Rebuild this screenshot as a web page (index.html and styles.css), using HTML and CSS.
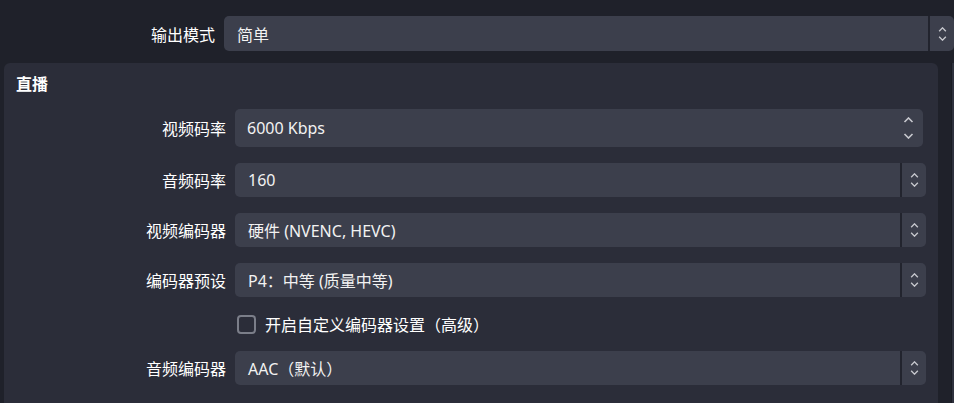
FILE: index.html
```html
<!DOCTYPE html>
<html lang="zh-CN">
<head>
  <meta charset="UTF-8">
  <meta name="viewport" content="width=device-width, initial-scale=1.0">
  <title>输出设置</title>
  <link rel="stylesheet" href="styles.css">
</head>
<body>
  <div class="top-row">
    <label class="top-label">输出模式</label>
    <div class="combo combo-top">
      <span class="combo-text">简单</span>
      <span class="combo-arrows">
        <svg class="chev" viewBox="0 0 10 6"><polyline points="1,5 5,1 9,5"/></svg>
        <svg class="chev" viewBox="0 0 10 6"><polyline points="1,1 5,5 9,1"/></svg>
      </span>
    </div>
  </div>

  <div class="content">
    <section class="group">
      <h2 class="group-title">直播</h2>
      <div class="form">
        <label class="form-label">视频码率</label>
        <div class="spinbox">
          <span class="combo-text">6000 Kbps</span>
          <span class="spin-arrows">
            <svg class="chev chev-big" viewBox="0 0 10 6"><polyline points="1,5 5,1 9,5"/></svg>
            <svg class="chev chev-big" viewBox="0 0 10 6"><polyline points="1,1 5,5 9,1"/></svg>
          </span>
        </div>

        <label class="form-label">音频码率</label>
        <div class="combo">
          <span class="combo-text">160</span>
          <span class="combo-arrows">
            <svg class="chev" viewBox="0 0 10 6"><polyline points="1,5 5,1 9,5"/></svg>
            <svg class="chev" viewBox="0 0 10 6"><polyline points="1,1 5,5 9,1"/></svg>
          </span>
        </div>

        <label class="form-label">视频编码器</label>
        <div class="combo">
          <span class="combo-text">硬件 (NVENC, HEVC)</span>
          <span class="combo-arrows">
            <svg class="chev" viewBox="0 0 10 6"><polyline points="1,5 5,1 9,5"/></svg>
            <svg class="chev" viewBox="0 0 10 6"><polyline points="1,1 5,5 9,1"/></svg>
          </span>
        </div>

        <label class="form-label">编码器预设</label>
        <div class="combo">
          <span class="combo-text">P4：中等 (质量中等)</span>
          <span class="combo-arrows">
            <svg class="chev" viewBox="0 0 10 6"><polyline points="1,5 5,1 9,5"/></svg>
            <svg class="chev" viewBox="0 0 10 6"><polyline points="1,1 5,5 9,1"/></svg>
          </span>
        </div>

        <span></span>
        <label class="check-row">
          <span class="checkbox"></span>
          <span>开启自定义编码器设置（高级）</span>
        </label>

        <label class="form-label">音频编码器</label>
        <div class="combo">
          <span class="combo-text">AAC（默认）</span>
          <span class="combo-arrows">
            <svg class="chev" viewBox="0 0 10 6"><polyline points="1,5 5,1 9,5"/></svg>
            <svg class="chev" viewBox="0 0 10 6"><polyline points="1,1 5,5 9,1"/></svg>
          </span>
        </div>
      </div>
    </section>
    <div class="scrollbar">
      <div class="scroll-handle"></div>
    </div>
  </div>
</body>
</html>
```

FILE: styles.css
```css
html, body {
  margin: 0;
  height: 100%;
  overflow: hidden;
}
body {
  background-color: #1f212a;
  color: #ffffff;
  font-family: "Noto Sans", "Noto Sans CJK SC", sans-serif;
  font-size: 16px;
}
.top-row {
  display: flex;
  align-items: center;
  padding-top: 16px;
  height: 35px;
}
.top-label {
  width: 224px;
  padding-right: 9px;
  box-sizing: border-box;
  text-align: right;
  flex: none;
}
.combo, .spinbox {
  display: flex;
  align-items: center;
  background-color: #3c3f4c;
  border-radius: 5px;
  height: 34px;
  font-size: 16px;
  color: #f2f2f2;
  overflow: hidden;
}
.combo-top {
  flex: 1;
  height: 35px;
}
.combo-text {
  flex: 1;
  padding-left: 13px;
  white-space: nowrap;
}
.combo-arrows {
  width: 24px;
  height: 100%;
  border-left: 2px solid #22242e;
  display: flex;
  flex-direction: column;
  align-items: center;
  justify-content: center;
  gap: 4px;
}
.chev {
  width: 9px;
  height: 5px;
  fill: none;
  stroke: #c8c9cf;
  stroke-width: 1.6;
  display: block;
}
.content {
  display: flex;
  margin-top: 12px;
  height: 340px;
}
.group {
  margin-left: 4px;
  width: 934px;
  background-color: #2b2d39;
  border-radius: 6px 6px 0 0;
  padding-top: 11px;
  box-sizing: border-box;
}
.group-title {
  margin: 0 0 15px 12px;
  font-size: 16px;
  font-weight: bold;
  line-height: 20px;
}
.form {
  display: grid;
  grid-template-columns: 222px 1fr;
  column-gap: 9px;
  row-gap: 16px;
  align-items: center;
  padding-right: 12px;
}
.form-label {
  text-align: right;
  white-space: nowrap;
}
.spinbox {
  height: 38px;
  margin-right: 3px;
}
.spinbox .combo-text {
  padding-left: 12px;
}
.spin-arrows {
  display: flex;
  flex-direction: column;
  align-items: center;
  gap: 10px;
  padding-right: 9px;
}
.chev-big {
  width: 11px;
  height: 6px;
}
.check-row {
  display: flex;
  align-items: center;
  gap: 9px;
  height: 22px;
  margin-left: 2px;
}
.checkbox {
  width: 15px;
  height: 15px;
  border: 2px solid #7b7e89;
  border-radius: 4px;
}
.scrollbar {
  flex: 1;
  display: flex;
  justify-content: flex-end;
}
.scroll-handle {
  width: 2px;
  border-left: 1px solid #1a1c24;
  background-color: #2e313d;
}
```
